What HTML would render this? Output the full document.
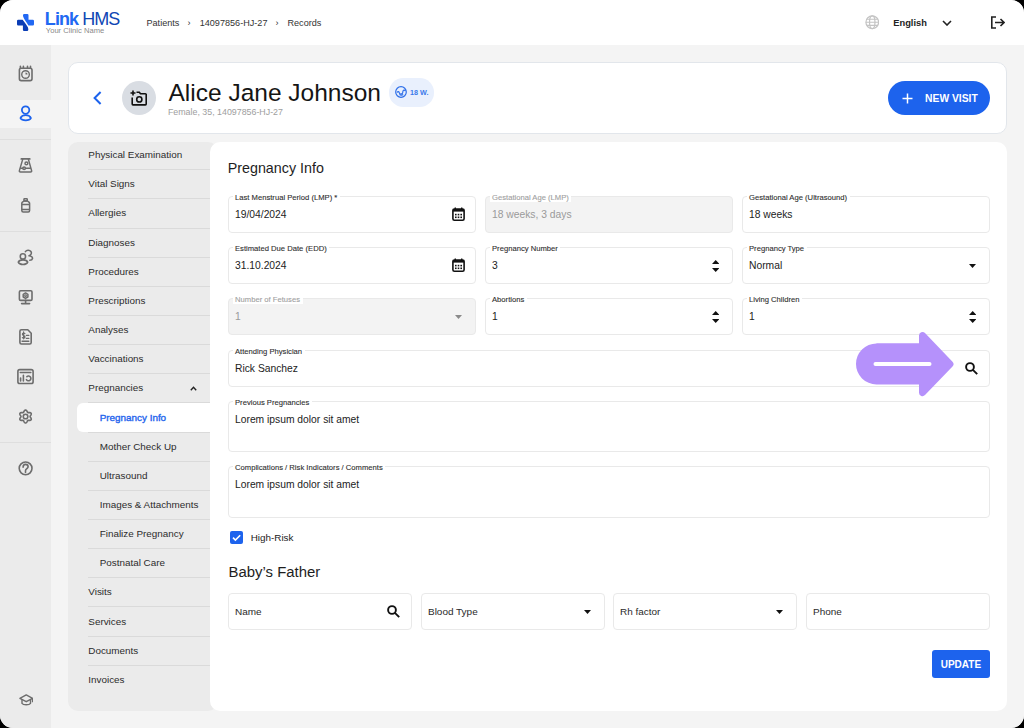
<!DOCTYPE html>
<html><head><meta charset="utf-8"><style>
html,body{margin:0;padding:0;background:#000;}
#page{position:relative;width:1024px;height:728px;overflow:hidden;border-radius:13px;background:#f3f3f3;font-family:"Liberation Sans",sans-serif;}
.t{position:absolute;line-height:1;white-space:nowrap;}
.r{position:absolute;}
</style></head><body><div id="page">
<div class="r" style="left:0.00px;top:0.00px;width:1024.00px;height:45.00px;background:#fff"></div>
<svg class="r" style="left:17.00px;top:14.00px;" width="17" height="17" viewBox="0 0 17 17"><path d="M7.2 0H10.3Q11.5 0 11.5 1.2V5.7H15.8Q17 5.7 17 6.9V10.2Q17 11.4 15.8 11.4H11.4C10.6 9.8 9 7.8 7.9 6 6.8 4.3 6 3 6 1.6V1.2Q6 0 7.2 0Z" fill="#2168f3"/><path d="M1.2 5.7H5.6C6.4 6.6 8.4 9.5 10.1 11.9 10.9 12.9 11.3 14 11.3 15V15.8Q11.3 17 10.1 17H7.1Q5.9 17 5.9 15.8V11.4H1.2Q0 11.4 0 10.2V6.9Q0 5.7 1.2 5.7Z" fill="#0a3db5"/></svg>
<div class="t" style="left:44.80px;top:10px;font-size:18px;color:#2168f2;font-weight:bold;letter-spacing:-0.9px">Link</div>
<div class="t" style="left:82.20px;top:10px;font-size:18px;color:#0f46b4;font-weight:normal;letter-spacing:-1px">HMS</div>
<div class="t" style="left:45.80px;top:27px;font-size:7.6px;color:#8a8a8a;font-weight:normal;">Your Clinic Name</div>
<div class="t" style="left:146.50px;top:19px;font-size:9.1px;color:#333;font-weight:normal;">Patients</div>
<div class="t" style="left:187.50px;top:19px;font-size:9.1px;color:#333;font-weight:normal;">&#8250;</div>
<div class="t" style="left:199.70px;top:19px;font-size:9.1px;color:#333;font-weight:normal;">14097856-HJ-27</div>
<div class="t" style="left:275.50px;top:19px;font-size:9.1px;color:#333;font-weight:normal;">&#8250;</div>
<div class="t" style="left:287.50px;top:19px;font-size:9.1px;color:#333;font-weight:normal;">Records</div>
<svg class="r" style="left:864.50px;top:15.00px;" width="14.5" height="14.5" viewBox="0 0 24 24"><g fill="none" stroke="#c4c4c4" stroke-width="2"><circle cx="12" cy="12" r="10.5"/><ellipse cx="12" cy="12" rx="4.5" ry="10.5"/><path d="M1.5 12h21M3 7h18M3 17h18"/></g></svg>
<div class="t" style="left:893.30px;top:19px;font-size:9.3px;color:#222;font-weight:bold;">English</div>
<svg class="r" style="left:942.00px;top:20.00px;" width="10" height="6" viewBox="0 0 10 6"><path d="M1 1l4 4 4-4" fill="none" stroke="#222" stroke-width="1.6"/></svg>
<svg class="r" style="left:989.90px;top:16.10px;" width="15" height="13" viewBox="0 0 15 13"><g fill="none" stroke="#222" stroke-width="1.6"><path d="M6 1H1.8v11H6"/><path d="M5 6.5h9M10.5 3l3.5 3.5-3.5 3.5"/></g></svg>
<div class="r" style="left:0.00px;top:45.00px;width:51.00px;height:683.00px;background:#ebebeb"></div>
<div class="r" style="left:0.00px;top:99.70px;width:51.00px;height:28.10px;background:#f4f4f4"></div>
<div class="r" style="left:0.00px;top:139.00px;width:51.00px;height:1.00px;background:#dedede"></div>
<div class="r" style="left:0.00px;top:230.60px;width:51.00px;height:1.00px;background:#dedede"></div>
<div class="r" style="left:0.00px;top:442.00px;width:51.00px;height:1.00px;background:#dedede"></div>
<svg class="r" style="left:14.00px;top:61.00px;" width="24" height="24" viewBox="0 0 24 24"><g fill="none" stroke="#6d6d6d" stroke-width="1.6" stroke-linecap="round"><rect x="5.4" y="7.3" width="12.6" height="12.3" rx="1.8"/><path d="M6.4 5.3v2M9.4 5.3v2M13.5 5.3v2M16.5 5.3v2"/><circle cx="11.54" cy="13.5" r="3.8" stroke-width="1.4"/></g><path d="M11.5 13.6V11.4A2 2 0 0 1 13.6 13.4Z" fill="#6d6d6d"/></svg>
<svg class="r" style="left:14.00px;top:101.00px;" width="24" height="24" viewBox="0 0 24 24"><g fill="none" stroke="#1d63ed" stroke-width="1.8" stroke-linejoin="round"><circle cx="11.6" cy="9.1" r="3.7"/><path d="M6.5 17.1C8 13.2 15.4 13.2 16.9 17.1 15.4 20 8 20 6.5 17.1Z"/></g></svg>
<svg class="r" style="left:14.00px;top:153.00px;" width="24" height="24" viewBox="0 0 24 24"><g fill="none" stroke="#6d6d6d" stroke-width="1.5" stroke-linecap="round" stroke-linejoin="round"><path d="M7.3 5.9H15.8" stroke-width="1.7"/><path d="M8.7 6.4L5.4 17.6Q5.1 18.9 6.4 18.9H16.6Q17.9 18.9 17.6 17.6L14.4 6.4"/><path d="M6.6 15.3H8.8M11.4 15.3H16.4"/><circle cx="10.1" cy="15.3" r="1.3"/><circle cx="12.4" cy="10.4" r="1.4"/></g></svg>
<svg class="r" style="left:14.00px;top:193.00px;" width="24" height="24" viewBox="0 0 24 24"><g fill="none" stroke="#6d6d6d" stroke-width="1.5" stroke-linejoin="round"><rect x="9.95" y="5.65" width="3.3" height="2.3" rx="0.6"/><path d="M9.9 8L8.2 9.4Q7.8 9.8 7.8 10.5V17.6Q7.8 19.1 9.3 19.1H14.2Q15.6 19.1 15.6 17.6V10.5Q15.6 9.8 15.2 9.4L13.5 8Z"/><path d="M7.8 11.5H15.6M7.8 16.4H15.6"/></g></svg>
<svg class="r" style="left:14.00px;top:245.00px;" width="24" height="24" viewBox="0 0 24 24"><g fill="none" stroke="#6d6d6d" stroke-width="1.55" stroke-linecap="round" stroke-linejoin="round"><circle cx="8.9" cy="11.4" r="2.65"/><path d="M4.3 17.1C5.5 14.1 12.5 14.1 13.7 17.1 12.5 20.2 5.5 20.2 4.3 17.1Z"/><path d="M11.4 6.6C12.5 5 15.5 4.5 16.9 6.5 18 8 17 10.3 15 10.8 17 11.1 18.8 12 18.5 13.5 18.2 15 16.8 15.3 15.8 15.3"/></g></svg>
<svg class="r" style="left:14.00px;top:285.00px;" width="24" height="24" viewBox="0 0 24 24"><g fill="none" stroke="#6d6d6d" stroke-width="1.6" stroke-linecap="round" stroke-linejoin="round"><rect x="5.4" y="5.7" width="12.6" height="9.7" rx="1.2"/><path d="M11.6 15.4V18.5M7.6 18.6H15.6"/><path d="M11.54 7.9L13.9 9.3V12L11.54 13.4 9.2 12V9.3Z" stroke-width="1.5"/><circle cx="11.54" cy="10.65" r="0.9" stroke-width="1.1"/></g></svg>
<svg class="r" style="left:14.00px;top:325.00px;" width="24" height="24" viewBox="0 0 24 24"><g fill="none" stroke="#6d6d6d" stroke-width="1.6" stroke-linecap="round" stroke-linejoin="round"><path d="M7.4 4.8H13.8L17.2 8.2V17.6Q17.2 19 15.8 19H7.4Q5.9 19 5.9 17.6V6.3Q5.9 4.8 7.4 4.8Z"/><path d="M8.1 16.2H14.8" stroke-width="1.4"/><path d="M12.4 10.4H14.8M12.4 13.4H14.8" stroke-width="1.3"/><path d="M10.9 8.6C10.4 8 8.4 7.9 8.4 9.3 8.4 10.8 11 10.4 11 12 11 13.3 9 13.4 8.4 12.6M9.6 6.9V13.8" stroke-width="1.2"/></g></svg>
<svg class="r" style="left:14.00px;top:364.00px;" width="24" height="24" viewBox="0 0 24 24"><g fill="none" stroke="#6d6d6d" stroke-width="1.6" stroke-linecap="round"><rect x="3.9" y="5.6" width="15.2" height="13.9" rx="1.8"/><path d="M6.3 8.5H16.8M6.6 14V17M9.4 11.4V17"/><path d="M12.9 12.6A2.4 2.4 0 1 1 12.4 15.6"/></g></svg>
<svg class="r" style="left:14.00px;top:404.00px;" width="24" height="24" viewBox="0 0 24 24"><g fill="none" stroke="#6d6d6d" stroke-width="1.6" stroke-linejoin="round"><path d="M16.09 12.50 L16.15 12.80 L16.33 13.13 L16.58 13.50 L16.85 13.92 L17.09 14.38 L17.24 14.86 L17.26 15.32 L17.13 15.72 L16.84 16.04 L16.44 16.26 L15.95 16.37 L15.43 16.39 L14.93 16.36 L14.48 16.33 L14.11 16.34 L13.81 16.44 L13.58 16.65 L13.39 16.96 L13.19 17.36 L12.96 17.81 L12.68 18.25 L12.35 18.62 L11.96 18.86 L11.54 18.95 L11.12 18.86 L10.73 18.62 L10.40 18.25 L10.12 17.81 L9.89 17.36 L9.69 16.96 L9.50 16.65 L9.27 16.44 L8.97 16.34 L8.60 16.33 L8.15 16.36 L7.65 16.39 L7.13 16.37 L6.64 16.26 L6.24 16.04 L5.95 15.72 L5.82 15.32 L5.84 14.86 L5.99 14.38 L6.23 13.92 L6.50 13.50 L6.75 13.13 L6.93 12.80 L6.99 12.50 L6.93 12.20 L6.75 11.87 L6.50 11.50 L6.23 11.08 L5.99 10.62 L5.84 10.14 L5.82 9.68 L5.95 9.28 L6.24 8.96 L6.64 8.74 L7.13 8.63 L7.65 8.61 L8.15 8.64 L8.60 8.67 L8.97 8.66 L9.26 8.56 L9.50 8.35 L9.69 8.04 L9.89 7.64 L10.12 7.19 L10.40 6.75 L10.73 6.38 L11.12 6.14 L11.54 6.05 L11.96 6.14 L12.35 6.38 L12.68 6.75 L12.96 7.19 L13.19 7.64 L13.39 8.04 L13.58 8.35 L13.81 8.56 L14.11 8.66 L14.48 8.67 L14.93 8.64 L15.43 8.61 L15.95 8.63 L16.44 8.74 L16.84 8.96 L17.13 9.27 L17.26 9.68 L17.24 10.14 L17.09 10.62 L16.85 11.08 L16.58 11.50 L16.33 11.87 L16.15 12.20 L16.09 12.50Z"/><circle cx="11.54" cy="12.5" r="2.3"/></g></svg>
<svg class="r" style="left:14.00px;top:456.00px;" width="24" height="24" viewBox="0 0 24 24"><g fill="none" stroke="#6d6d6d" stroke-width="1.6" stroke-linecap="round"><circle cx="11.6" cy="12.35" r="6.4"/><path d="M9.1 11.2C9.1 9.5 10.2 8.4 11.5 8.4 12.9 8.4 14.1 9.4 14.1 10.8 14.1 12.5 11.5 12.9 11.5 14.8V16.4"/></g></svg>
<svg class="r" style="left:18.50px;top:693.80px;" width="14.5" height="12.5" viewBox="0 0 14.5 12.5"><g fill="none" stroke="#6d6d6d" stroke-width="1.4" stroke-linejoin="round"><path d="M0.9 4.3L7.25 0.9l6.35 3.4-6.35 3.4z"/><path d="M3 5.5v3.8c1.3 2 7.2 2 8.5 0V5.5M13.6 4.3v4"/></g></svg>
<div class="r" style="left:51.00px;top:45.00px;width:973.00px;height:683.00px;background:#f4f4f4"></div>
<div class="r" style="left:68.00px;top:62.00px;width:939.00px;height:72.00px;background:#fff;border:1px solid #e2e6eb;border-radius:10px;box-sizing:border-box"></div>
<svg class="r" style="left:92.80px;top:90.80px;" width="9" height="14" viewBox="0 0 9 14"><path d="M7.6 1L1.6 7l6 6" fill="none" stroke="#1d63ed" stroke-width="2"/></svg>
<div class="r" style="left:122.30px;top:81.00px;width:34.00px;height:34.00px;background:#d9dde3;border-radius:50%"></div>
<svg class="r" style="left:129.80px;top:90.00px;" width="17" height="15.5" viewBox="0 0 17 15.5"><g fill="none" stroke="#111" stroke-width="1.6"><path d="M0.5 3h5M3 0.5v5"/><path d="M6.5 2.2h2.8l1.2 1.6h4.9a0.8 0.8 0 0 1 .8.8v9.5a0.8 0.8 0 0 1-.8.8H3a0.8 0.8 0 0 1-.8-.8V7.5"/><circle cx="9.3" cy="9.4" r="2.6"/></g></svg>
<div class="t" style="left:168.50px;top:81px;font-size:24.5px;color:#151515;font-weight:normal;">Alice Jane Johnson</div>
<div class="t" style="left:167.90px;top:108px;font-size:8.85px;color:#9e9e9e;font-weight:normal;">Female, 35, 14097856-HJ-27</div>
<div class="r" style="left:389.30px;top:78.00px;width:45.00px;height:28.60px;background:#e9f0fd;border-radius:14.3px"></div>
<svg class="r" style="left:395.00px;top:86.30px;" width="12" height="12" viewBox="0 0 12 12"><g fill="none" stroke="#2e6fe9" stroke-width="1.2"><circle cx="6" cy="6" r="5.3"/><path d="M2 6.5c1-1.5 2-1 2.3.3.4 1.6 2.4 1.8 3.2.3.6-1.2 0-2.6 1.3-2.9 1-.2 1.5.5 1.6 1"/><path d="M4.5 8.5c1 .9 2.7.9 3.6-.2"/></g></svg>
<div class="t" style="left:410.00px;top:89px;font-size:7.2px;color:#3a78ea;font-weight:bold;">18 W.</div>
<div class="r" style="left:887.60px;top:81.00px;width:102.40px;height:34.00px;background:#1d63ed;border-radius:17px"></div>
<svg class="r" style="left:902.00px;top:93.00px;" width="11" height="11" viewBox="0 0 11 11"><path d="M5.5 0.5v10M0.5 5.5h10" stroke="#fff" stroke-width="1.5"/></svg>
<div class="t" style="left:925.10px;top:94px;font-size:10.3px;color:#fff;font-weight:bold;">NEW VISIT</div>
<div class="r" style="left:68.00px;top:142.00px;width:150.00px;height:569.00px;background:#ebebeb;border-radius:10px"></div>
<div class="r" style="left:88.20px;top:169.20px;width:122.00px;height:1.00px;background:#dadada"></div>
<div class="t" style="left:88.30px;top:150px;font-size:9.9px;color:#2b2b2b;font-weight:normal;">Physical Examination</div>
<div class="r" style="left:88.20px;top:198.35px;width:122.00px;height:1.00px;background:#dadada"></div>
<div class="t" style="left:88.30px;top:179px;font-size:9.9px;color:#2b2b2b;font-weight:normal;">Vital Signs</div>
<div class="r" style="left:88.20px;top:227.50px;width:122.00px;height:1.00px;background:#dadada"></div>
<div class="t" style="left:88.30px;top:208px;font-size:9.9px;color:#2b2b2b;font-weight:normal;">Allergies</div>
<div class="r" style="left:88.20px;top:256.65px;width:122.00px;height:1.00px;background:#dadada"></div>
<div class="t" style="left:88.30px;top:238px;font-size:9.9px;color:#2b2b2b;font-weight:normal;">Diagnoses</div>
<div class="r" style="left:88.20px;top:285.80px;width:122.00px;height:1.00px;background:#dadada"></div>
<div class="t" style="left:88.30px;top:267px;font-size:9.9px;color:#2b2b2b;font-weight:normal;">Procedures</div>
<div class="r" style="left:88.20px;top:314.95px;width:122.00px;height:1.00px;background:#dadada"></div>
<div class="t" style="left:88.30px;top:296px;font-size:9.9px;color:#2b2b2b;font-weight:normal;">Prescriptions</div>
<div class="r" style="left:88.20px;top:344.10px;width:122.00px;height:1.00px;background:#dadada"></div>
<div class="t" style="left:88.30px;top:325px;font-size:9.9px;color:#2b2b2b;font-weight:normal;">Analyses</div>
<div class="r" style="left:88.20px;top:373.25px;width:122.00px;height:1.00px;background:#dadada"></div>
<div class="t" style="left:88.30px;top:354px;font-size:9.9px;color:#2b2b2b;font-weight:normal;">Vaccinations</div>
<div class="r" style="left:88.20px;top:402.40px;width:122.00px;height:1.00px;background:#dadada"></div>
<div class="t" style="left:88.30px;top:383px;font-size:9.9px;color:#2b2b2b;font-weight:normal;">Pregnancies</div>
<div class="r" style="left:88.20px;top:431.55px;width:122.00px;height:1.00px;background:#dadada"></div>
<div class="r" style="left:77.10px;top:402.60px;width:140.00px;height:29.20px;background:#fff;border-radius:6px"></div>
<div class="t" style="left:99.70px;top:413px;font-size:9.9px;color:#1d63ed;font-weight:normal;-webkit-text-stroke:0.35px #1d63ed">Pregnancy Info</div>
<div class="r" style="left:88.20px;top:460.70px;width:122.00px;height:1.00px;background:#dadada"></div>
<div class="t" style="left:99.70px;top:442px;font-size:9.9px;color:#2b2b2b;font-weight:normal;">Mother Check Up</div>
<div class="r" style="left:88.20px;top:489.85px;width:122.00px;height:1.00px;background:#dadada"></div>
<div class="t" style="left:99.70px;top:471px;font-size:9.9px;color:#2b2b2b;font-weight:normal;">Ultrasound</div>
<div class="r" style="left:88.20px;top:519.00px;width:122.00px;height:1.00px;background:#dadada"></div>
<div class="t" style="left:99.70px;top:500px;font-size:9.9px;color:#2b2b2b;font-weight:normal;">Images &amp; Attachments</div>
<div class="r" style="left:88.20px;top:548.15px;width:122.00px;height:1.00px;background:#dadada"></div>
<div class="t" style="left:99.70px;top:529px;font-size:9.9px;color:#2b2b2b;font-weight:normal;">Finalize Pregnancy</div>
<div class="r" style="left:88.20px;top:577.30px;width:122.00px;height:1.00px;background:#dadada"></div>
<div class="t" style="left:99.70px;top:558px;font-size:9.9px;color:#2b2b2b;font-weight:normal;">Postnatal Care</div>
<div class="r" style="left:88.20px;top:606.45px;width:122.00px;height:1.00px;background:#dadada"></div>
<div class="t" style="left:88.30px;top:587px;font-size:9.9px;color:#2b2b2b;font-weight:normal;">Visits</div>
<div class="r" style="left:88.20px;top:635.60px;width:122.00px;height:1.00px;background:#dadada"></div>
<div class="t" style="left:88.30px;top:617px;font-size:9.9px;color:#2b2b2b;font-weight:normal;">Services</div>
<div class="r" style="left:88.20px;top:664.75px;width:122.00px;height:1.00px;background:#dadada"></div>
<div class="t" style="left:88.30px;top:646px;font-size:9.9px;color:#2b2b2b;font-weight:normal;">Documents</div>
<div class="t" style="left:88.30px;top:675px;font-size:9.9px;color:#2b2b2b;font-weight:normal;">Invoices</div>
<svg class="r" style="left:190.30px;top:385.80px;" width="7" height="5" viewBox="0 0 7 5"><path d="M0.8 4.2L3.5 1.3l2.7 2.9" fill="none" stroke="#222" stroke-width="1.4"/></svg>
<div class="r" style="left:210.00px;top:142.00px;width:797.00px;height:569.00px;background:#fff;border-radius:10px"></div>
<div class="t" style="left:227.70px;top:161px;font-size:14.3px;color:#1e1e1e;font-weight:normal;">Pregnancy Info</div>
<div class="r" style="left:228.00px;top:196.00px;width:248.00px;height:37.00px;background:#fff;border:1px solid #e9e9e9;border-radius:4px;box-sizing:border-box"></div>
<div class="r" style="left:232.50px;top:195.00px;width:107.47px;height:6.50px;background:#fff"></div>
<div class="t" style="left:235.00px;top:194px;font-size:7.65px;color:#2e2e2e;font-weight:normal;-webkit-text-stroke:0.1px #2e2e2e">Last Menstrual Period (LMP) *</div>
<div class="t" style="left:235.00px;top:210px;font-size:10.3px;color:#222;font-weight:normal;">19/04/2024</div>
<svg class="r" style="left:451.70px;top:206.50px;" width="13" height="14" viewBox="0 0 13 14"><rect x="0.9" y="2" width="11.2" height="11.2" rx="1.5" fill="none" stroke="#111" stroke-width="1.6"/><rect x="0.9" y="2" width="11.2" height="2.6" fill="#111"/><path d="M3.3 0.5v2M9.7 0.5v2" stroke="#111" stroke-width="1.4"/><g fill="#111"><rect x="3" y="6.8" width="1.6" height="1.6"/><rect x="5.7" y="6.8" width="1.6" height="1.6"/><rect x="8.4" y="6.8" width="1.6" height="1.6"/><rect x="3" y="9.5" width="1.6" height="1.6"/><rect x="5.7" y="9.5" width="1.6" height="1.6"/><rect x="8.4" y="9.5" width="1.6" height="1.6"/></g></svg>
<div class="r" style="left:485.00px;top:196.00px;width:248.00px;height:37.00px;background:#f3f3f3;border:1px solid #e9e9e9;border-radius:4px;box-sizing:border-box"></div>
<div class="r" style="left:489.50px;top:195.00px;width:81.96px;height:6.50px;background:#fff"></div>
<div class="t" style="left:492.00px;top:194px;font-size:7.65px;color:#9e9e9e;font-weight:normal;-webkit-text-stroke:0.1px #9e9e9e">Gestational Age (LMP)</div>
<div class="t" style="left:492.00px;top:210px;font-size:10.3px;color:#9a9a9a;font-weight:normal;">18 weeks, 3 days</div>
<div class="r" style="left:742.00px;top:196.00px;width:248.00px;height:37.00px;background:#fff;border:1px solid #e9e9e9;border-radius:4px;box-sizing:border-box"></div>
<div class="r" style="left:746.50px;top:195.00px;width:103.23px;height:6.50px;background:#fff"></div>
<div class="t" style="left:749.00px;top:194px;font-size:7.65px;color:#2e2e2e;font-weight:normal;-webkit-text-stroke:0.1px #2e2e2e">Gestational Age (Ultrasound)</div>
<div class="t" style="left:749.00px;top:210px;font-size:10.3px;color:#222;font-weight:normal;">18 weeks</div>
<div class="r" style="left:228.00px;top:247.00px;width:248.00px;height:37.00px;background:#fff;border:1px solid #e9e9e9;border-radius:4px;box-sizing:border-box"></div>
<div class="r" style="left:232.50px;top:246.00px;width:96.83px;height:6.50px;background:#fff"></div>
<div class="t" style="left:235.00px;top:245px;font-size:7.65px;color:#2e2e2e;font-weight:normal;-webkit-text-stroke:0.1px #2e2e2e">Estimated Due Date (EDD)</div>
<div class="t" style="left:235.00px;top:261px;font-size:10.3px;color:#222;font-weight:normal;">31.10.2024</div>
<svg class="r" style="left:451.70px;top:257.50px;" width="13" height="14" viewBox="0 0 13 14"><rect x="0.9" y="2" width="11.2" height="11.2" rx="1.5" fill="none" stroke="#111" stroke-width="1.6"/><rect x="0.9" y="2" width="11.2" height="2.6" fill="#111"/><path d="M3.3 0.5v2M9.7 0.5v2" stroke="#111" stroke-width="1.4"/><g fill="#111"><rect x="3" y="6.8" width="1.6" height="1.6"/><rect x="5.7" y="6.8" width="1.6" height="1.6"/><rect x="8.4" y="6.8" width="1.6" height="1.6"/><rect x="3" y="9.5" width="1.6" height="1.6"/><rect x="5.7" y="9.5" width="1.6" height="1.6"/><rect x="8.4" y="9.5" width="1.6" height="1.6"/></g></svg>
<div class="r" style="left:485.00px;top:247.00px;width:248.00px;height:37.00px;background:#fff;border:1px solid #e9e9e9;border-radius:4px;box-sizing:border-box"></div>
<div class="r" style="left:489.50px;top:246.00px;width:70.91px;height:6.50px;background:#fff"></div>
<div class="t" style="left:492.00px;top:245px;font-size:7.65px;color:#2e2e2e;font-weight:normal;-webkit-text-stroke:0.1px #2e2e2e">Pregnancy Number</div>
<div class="t" style="left:492.00px;top:261px;font-size:10.3px;color:#222;font-weight:normal;">3</div>
<svg class="r" style="left:712.00px;top:260.20px;" width="7.4" height="12" viewBox="0 0 7.4 12"><path d="M0 4L3.7 0 7.4 4z M0 8h7.4L3.7 12z" fill="#111"/></svg>
<div class="r" style="left:742.00px;top:247.00px;width:248.00px;height:37.00px;background:#fff;border:1px solid #e9e9e9;border-radius:4px;box-sizing:border-box"></div>
<div class="r" style="left:746.50px;top:246.00px;width:60.15px;height:6.50px;background:#fff"></div>
<div class="t" style="left:749.00px;top:245px;font-size:7.65px;color:#2e2e2e;font-weight:normal;-webkit-text-stroke:0.1px #2e2e2e">Pregnancy Type</div>
<div class="t" style="left:749.00px;top:261px;font-size:10.3px;color:#222;font-weight:normal;">Normal</div>
<svg class="r" style="left:969.00px;top:263.50px;" width="7" height="4" viewBox="0 0 7 4"><path d="M0 0h7L3.5 4z" fill="#111"/></svg>
<div class="r" style="left:228.00px;top:298.00px;width:248.00px;height:37.00px;background:#f3f3f3;border:1px solid #e9e9e9;border-radius:4px;box-sizing:border-box"></div>
<div class="r" style="left:232.50px;top:297.00px;width:70.05px;height:6.50px;background:#fff"></div>
<div class="t" style="left:235.00px;top:296px;font-size:7.65px;color:#9e9e9e;font-weight:normal;-webkit-text-stroke:0.1px #9e9e9e">Number of Fetuses</div>
<div class="t" style="left:235.00px;top:312px;font-size:10.3px;color:#9a9a9a;font-weight:normal;">1</div>
<svg class="r" style="left:455.00px;top:314.50px;" width="7" height="4" viewBox="0 0 7 4"><path d="M0 0h7L3.5 4z" fill="#8a8a8a"/></svg>
<div class="r" style="left:485.00px;top:298.00px;width:248.00px;height:37.00px;background:#fff;border:1px solid #e9e9e9;border-radius:4px;box-sizing:border-box"></div>
<div class="r" style="left:489.50px;top:297.00px;width:37.32px;height:6.50px;background:#fff"></div>
<div class="t" style="left:492.00px;top:296px;font-size:7.65px;color:#2e2e2e;font-weight:normal;-webkit-text-stroke:0.1px #2e2e2e">Abortions</div>
<div class="t" style="left:492.00px;top:312px;font-size:10.3px;color:#222;font-weight:normal;">1</div>
<svg class="r" style="left:712.00px;top:311.20px;" width="7.4" height="12" viewBox="0 0 7.4 12"><path d="M0 4L3.7 0 7.4 4z M0 8h7.4L3.7 12z" fill="#111"/></svg>
<div class="r" style="left:742.00px;top:298.00px;width:248.00px;height:37.00px;background:#fff;border:1px solid #e9e9e9;border-radius:4px;box-sizing:border-box"></div>
<div class="r" style="left:746.50px;top:297.00px;width:55.60px;height:6.50px;background:#fff"></div>
<div class="t" style="left:749.00px;top:296px;font-size:7.65px;color:#2e2e2e;font-weight:normal;-webkit-text-stroke:0.1px #2e2e2e">Living Children</div>
<div class="t" style="left:749.00px;top:312px;font-size:10.3px;color:#222;font-weight:normal;">1</div>
<svg class="r" style="left:969.00px;top:311.20px;" width="7.4" height="12" viewBox="0 0 7.4 12"><path d="M0 4L3.7 0 7.4 4z M0 8h7.4L3.7 12z" fill="#111"/></svg>
<div class="r" style="left:228.00px;top:350.00px;width:762.00px;height:37.00px;background:#fff;border:1px solid #e9e9e9;border-radius:4px;box-sizing:border-box"></div>
<div class="r" style="left:232.50px;top:349.00px;width:72.19px;height:6.50px;background:#fff"></div>
<div class="t" style="left:235.00px;top:348px;font-size:7.65px;color:#2e2e2e;font-weight:normal;-webkit-text-stroke:0.1px #2e2e2e">Attending Physician</div>
<div class="t" style="left:235.00px;top:364px;font-size:10.3px;color:#222;font-weight:normal;">Rick Sanchez</div>
<svg class="r" style="left:965.30px;top:361.80px;" width="13" height="13" viewBox="0 0 13 13"><g fill="none" stroke="#111" stroke-width="1.9"><circle cx="5" cy="5" r="3.9"/><path d="M7.9 7.9l4.3 4.3"/></g></svg>
<div class="r" style="left:228.00px;top:401.00px;width:762.00px;height:51.00px;background:#fff;border:1px solid #e9e9e9;border-radius:4px;box-sizing:border-box"></div>
<div class="r" style="left:232.50px;top:400.00px;width:79.42px;height:6.50px;background:#fff"></div>
<div class="t" style="left:235.00px;top:399px;font-size:7.65px;color:#2e2e2e;font-weight:normal;-webkit-text-stroke:0.1px #2e2e2e">Previous Pregnancies</div>
<div class="t" style="left:235.00px;top:415px;font-size:10.3px;color:#222;font-weight:normal;">Lorem ipsum dolor sit amet</div>
<div class="r" style="left:228.00px;top:466.00px;width:762.00px;height:52.00px;background:#fff;border:1px solid #e9e9e9;border-radius:4px;box-sizing:border-box"></div>
<div class="r" style="left:232.50px;top:465.00px;width:152.95px;height:6.50px;background:#fff"></div>
<div class="t" style="left:235.00px;top:464px;font-size:7.65px;color:#2e2e2e;font-weight:normal;-webkit-text-stroke:0.1px #2e2e2e">Complications / Risk Indicators / Comments</div>
<div class="t" style="left:235.00px;top:480px;font-size:10.3px;color:#222;font-weight:normal;">Lorem ipsum dolor sit amet</div>
<div class="r" style="left:229.50px;top:530.80px;width:13.00px;height:13.00px;background:#1d63ed;border-radius:2px"></div>
<svg class="r" style="left:229.50px;top:530.80px;" width="13" height="13" viewBox="0 0 13 13"><path d="M3 6.6l2.4 2.4 4.8-4.8" fill="none" stroke="#fff" stroke-width="1.6"/></svg>
<div class="t" style="left:250.70px;top:533px;font-size:9.9px;color:#222;font-weight:normal;">High-Risk</div>
<div class="t" style="left:228.60px;top:565px;font-size:14.9px;color:#1e1e1e;font-weight:normal;">Baby&#8217;s Father</div>
<div class="r" style="left:228.00px;top:593.00px;width:184.00px;height:37.00px;background:#fff;border:1px solid #e9e9e9;border-radius:4px;box-sizing:border-box"></div>
<div class="t" style="left:235.00px;top:607px;font-size:9.97px;color:#2a2a2a;font-weight:normal;">Name</div>
<svg class="r" style="left:387.30px;top:604.80px;" width="13" height="13" viewBox="0 0 13 13"><g fill="none" stroke="#111" stroke-width="1.9"><circle cx="5" cy="5" r="3.9"/><path d="M7.9 7.9l4.3 4.3"/></g></svg>
<div class="r" style="left:421.00px;top:593.00px;width:184.00px;height:37.00px;background:#fff;border:1px solid #e9e9e9;border-radius:4px;box-sizing:border-box"></div>
<div class="t" style="left:428.00px;top:607px;font-size:9.97px;color:#2a2a2a;font-weight:normal;">Blood Type</div>
<svg class="r" style="left:584.00px;top:609.50px;" width="7" height="4" viewBox="0 0 7 4"><path d="M0 0h7L3.5 4z" fill="#111"/></svg>
<div class="r" style="left:613.00px;top:593.00px;width:184.00px;height:37.00px;background:#fff;border:1px solid #e9e9e9;border-radius:4px;box-sizing:border-box"></div>
<div class="t" style="left:620.00px;top:607px;font-size:9.97px;color:#2a2a2a;font-weight:normal;">Rh factor</div>
<svg class="r" style="left:776.00px;top:609.50px;" width="7" height="4" viewBox="0 0 7 4"><path d="M0 0h7L3.5 4z" fill="#111"/></svg>
<div class="r" style="left:806.00px;top:593.00px;width:184.00px;height:37.00px;background:#fff;border:1px solid #e9e9e9;border-radius:4px;box-sizing:border-box"></div>
<div class="t" style="left:813.00px;top:607px;font-size:9.97px;color:#2a2a2a;font-weight:normal;">Phone</div>
<div class="r" style="left:931.50px;top:649.70px;width:58.30px;height:28.20px;background:#1d63ed;border-radius:3px"></div>
<div class="t" style="left:940.70px;top:660px;font-size:10px;color:#fff;font-weight:bold;">UPDATE</div>
<svg class="r" style="left:855.00px;top:331.00px;" width="100" height="66" viewBox="0 0 100 66"><path d="M21.5 12.3H64V4.5a3.5 3.5 0 0 1 6-2.4l27.5 28.6a3.5 3.5 0 0 1 0 4.8L70 64.1a3.5 3.5 0 0 1-6-2.4v-8.3H21.5a20.5 20.5 0 0 1 0-41z" fill="#b591fb"/><path d="M20.5 33h54" stroke="#fff" stroke-width="4" stroke-linecap="round"/></svg>
</div></body></html>
